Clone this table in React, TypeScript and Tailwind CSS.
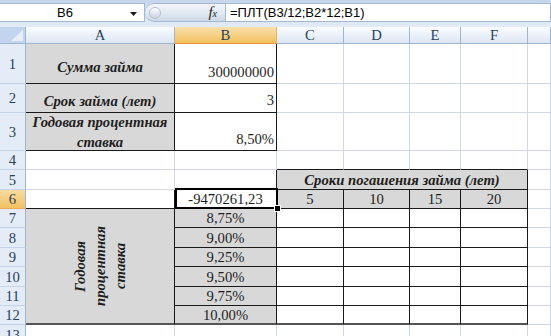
import type { ReactNode } from "react";

const COL = ["col-start-1", "col-start-2", "col-start-3", "col-start-4", "col-start-5", "col-start-6", "col-start-7", "col-start-8"];
const ROW = [
  "row-start-1", "row-start-2", "row-start-3", "row-start-4", "row-start-5", "row-start-6", "row-start-7",
  "row-start-8", "row-start-9", "row-start-10", "row-start-11", "row-start-12", "row-start-13", "row-start-14",
];
const LETTERS = ["A", "B", "C", "D", "E", "F", ""];

type Spec = {
  span?: string;
  gray?: boolean;
  br?: boolean;
  bb?: "k" | "t";
  pos?: string;
  sel?: boolean;
  body?: ReactNode;
};

const label = "font-bold italic text-center leading-[20px]";

const special: Record<string, Spec> = {
  "1-0": { gray: true, br: true, bb: "k", pos: "items-center justify-center pt-[6px]", body: <span className={label}>Сумма займа</span> },
  "1-1": { br: true, bb: "k", pos: "items-end justify-end pr-[2px]", body: "300000000" },
  "2-0": { gray: true, br: true, bb: "k", pos: "items-center justify-center pt-[5px]", body: <span className={label}>Срок займа (лет)</span> },
  "2-1": { br: true, bb: "k", pos: "items-end justify-end pr-[2px] pb-[1px]", body: "3" },
  "3-0": {
    gray: true, br: true, bb: "k", pos: "items-center justify-center",
    body: <span className={label}>Годовая процентная<br />ставка</span>,
  },
  "3-1": { br: true, bb: "k", pos: "items-end justify-end pr-[2px]", body: "8,50%" },
  "4-2": { bb: "k" }, "4-3": { bb: "k" }, "4-4": { bb: "k" }, "4-5": { bb: "k" },
  "5-1": { br: true },
  "5-2": { span: "col-span-4", gray: true, br: true, bb: "k", pos: "items-center justify-center", body: <span className={label}>Сроки погашения займа (лет)</span> },
  "6-0": { br: true, bb: "k" },
  "6-1": { sel: true, br: true, bb: "k", pos: "items-center justify-center", body: "-9470261,23" },
  "6-2": { gray: true, br: true, bb: "k", pos: "items-center justify-center", body: "5" },
  "6-3": { gray: true, br: true, bb: "k", pos: "items-center justify-center", body: "10" },
  "6-4": { gray: true, br: true, bb: "k", pos: "items-center justify-center", body: "15" },
  "6-5": { gray: true, br: true, bb: "k", pos: "items-center justify-center", body: "20" },
  "7-0": {
    span: "row-span-6", gray: true, br: true, bb: "t", pos: "items-center justify-center",
    body: (
      <span className="[writing-mode:vertical-rl] rotate-180 font-bold italic text-center leading-[20px]">
        Годовая<br />процентная<br />ставка
      </span>
    ),
  },
};

const rates = ["8,75%", "9,00%", "9,25%", "9,50%", "9,75%", "10,00%"];
rates.forEach((v, i) => {
  const r = 7 + i;
  const bb = r === 12 ? "t" : "k";
  special[`${r}-1`] = { gray: true, br: true, bb, pos: "items-center justify-center", body: v };
  for (let c = 2; c <= 5; c++) special[`${r}-${c}`] = { br: true, bb };
});

const skip = new Set(["5-3", "5-4", "5-5", "8-0", "9-0", "10-0", "11-0", "12-0"]);

function FormulaBar() {
  return (
    <div className="flex h-[27px] bg-linear-to-b from-[#c6d6ec] to-[#e3ebf6] pt-[3px] font-['Liberation_Sans',sans-serif] text-[13px] text-black">
      <div className="relative flex h-[19px] w-[145px] items-center border border-l-0 border-[#a5b8d1] bg-white">
        <span className="flex-1 pr-[14px] text-center">B6</span>
        <svg className="absolute right-[7px] top-[8px]" width="7" height="4" viewBox="0 0 7 4">
          <path d="M0 0h7L3.5 4z" fill="#1a1a1a" />
        </svg>
      </div>
      <div className="flex h-[19px] w-[81px] items-center rounded-l-full border border-l-0 border-[#a5b8d1] bg-linear-to-b from-[#f4f7fb] to-[#cfdae8] pl-[4px] pr-[8px]">
        <span className="h-[12px] w-[12px] rounded-full border border-[#b4c2d4] bg-linear-to-b from-white to-[#c6d2e2]" />
        <span className="ml-auto font-['Liberation_Serif',serif] text-[15px] italic text-[#222]">
          f<span className="text-[10px]">x</span>
        </span>
      </div>
      <div className="flex h-[19px] flex-1 items-center border border-l-0 border-[#a5b8d1] bg-white pl-[4px]">
        =ПЛТ(B3/12;B2*12;B1)
      </div>
    </div>
  );
}

function Sheet() {
  const cells: ReactNode[] = [];

  for (let r = 1; r <= 13; r++) {
    const hdr = r === 6
      ? "bg-linear-to-b from-[#f9dba0] to-[#f2c261] border-b-[#f0a950]"
      : "bg-[#e4ecf7] border-b-[#c5d4e8]";
    cells.push(
      <div
        key={`h${r}`}
        className={`${COL[0]} ${ROW[r]} flex items-center justify-center border-r border-b border-r-[#9eb6ce] text-[#27415f] ${hdr}`}
      >
        {r}
      </div>,
    );

    for (let c = 0; c <= 6; c++) {
      const key = `${r}-${c}`;
      if (skip.has(key)) continue;
      const s = special[key] ?? {};
      const br = s.br ? "border-r-[#1a1a1a]" : "border-r-[#d0d7e5]";
      const bb = s.bb === "t"
        ? "border-b-2 border-b-[#555]"
        : s.bb === "k"
          ? "border-b border-b-[#1a1a1a]"
          : "border-b border-b-[#d0d7e5]";
      cells.push(
        <div
          key={key}
          className={`${COL[c + 1]} ${ROW[r]} ${s.span ?? ""} relative flex border-r ${br} ${bb} ${s.gray ? "bg-[#d8d8d8]" : "bg-white"} ${s.pos ?? ""}`}
        >
          {s.body}
          {s.sel && (
            <>
              <span className="pointer-events-none absolute -top-[2px] left-0 -right-[2px] -bottom-[1px] z-10 border-2 border-black" />
              <span className="absolute -right-[5px] -bottom-[4px] z-20 h-[7px] w-[7px] border border-white bg-black" />
            </>
          )}
        </div>,
      );
    }
  }

  return (
    <div className="grid grid-cols-[26px_149px_102px_67px_66px_51px_67px_1fr] grid-rows-[17px_40px_29px_38px_19px_20px_19px_19px_20px_19px_20px_19px_19px_20px]">
      <div className="col-start-1 row-start-1 relative border-r border-b border-[#9eb6ce] bg-[#c3d5ee]">
        <svg className="absolute right-[2px] bottom-[2px]" width="12" height="11" viewBox="0 0 12 11">
          <path d="M12 0V11H0z" fill="#e6eef9" />
        </svg>
      </div>
      {LETTERS.map((l, i) => (
        <div
          key={`c${i}`}
          className={`${COL[i + 1]} row-start-1 flex items-center justify-center border-r border-b text-[#27415f] ${
            i === 1
              ? "bg-linear-to-b from-[#fae0ab] to-[#f1c15d] border-r-[#e0b46a] border-b-[#f29436]"
              : "bg-linear-to-b from-[#fafcfe] to-[#dce6f3] border-r-[#9eb6ce] border-b-[#9eb6ce]"
          }`}
        >
          {l}
        </div>
      ))}
      {cells}
    </div>
  );
}

export default function App() {
  return (
    <div className="h-[336px] w-[551px] overflow-hidden bg-white font-['Liberation_Serif','Times_New_Roman',serif] text-[14.67px] text-[#1e1e1e]">
      <FormulaBar />
      <Sheet />
    </div>
  );
}
